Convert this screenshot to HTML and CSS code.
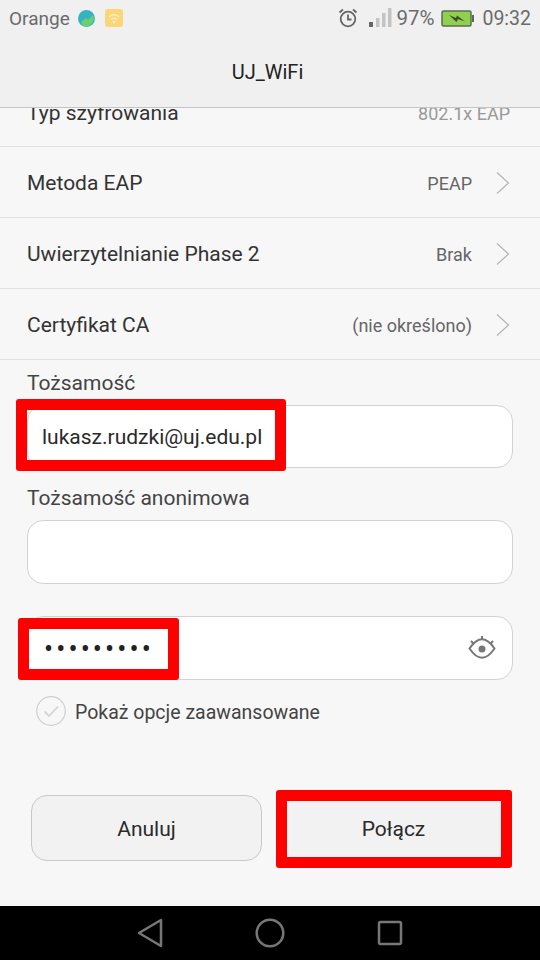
FILE: index.html
```html
<!DOCTYPE html>
<html lang="en">
<head>
    <meta charset="UTF-8">
    <meta name="viewport" content="width=device-width, initial-scale=1.0">
    <title>UJ_WiFi</title>
    <link rel="stylesheet" href="styles.css">
</head>
<body>
    <div class="screen">
        <div class="header">
            <div class="status-bar">
                <span class="carrier">Orange</span>
                <svg class="globe-icon" width="19" height="19" viewBox="0 0 19 19">
                    <circle cx="9.5" cy="9.5" r="8.5" fill="#35b3c4"/>
                    <path d="M4 13 L9 9 L11 11 L16 6 L17 10 Q15 16 9.5 18 Q6 17.500 4 13 Z" fill="#6fd06a"/>
                </svg>
                <svg class="wifi-icon" width="18" height="18" viewBox="0 0 18 18">
                    <rect width="18" height="18" rx="3" fill="#fbd679"/>
                    <path d="M4 8 Q9 3.500 14 8 M6 10.500 Q9 8 12 10.500" fill="none" stroke="#fdeebd" stroke-width="1.300"/>
                    <circle cx="9" cy="13" r="1.300" fill="#fdeebd"/>
                </svg>
                <span class="status-spacer"></span>
                <svg class="alarm-icon" width="20" height="20" viewBox="0 0 20 20" fill="none" stroke="#666" stroke-width="1.800">
                    <circle cx="10" cy="11" r="7.300"/>
                    <path d="M10 6.500 V11.500 H13.500"/>
                    <path d="M1.500 4.500 L5 1.500 M18.500 4.500 L15 1.500"/>
                </svg>
                <svg class="signal-icon" width="23" height="20" viewBox="0 0 23 20">
                    <rect x="0" y="14" width="4" height="5" fill="#666"/>
                    <rect x="7" y="10" width="3.500" height="9" fill="#c4c4c4"/>
                    <rect x="13" y="5" width="3.500" height="14" fill="#c4c4c4"/>
                    <rect x="19" y="0" width="3.500" height="19" fill="#c4c4c4"/>
                </svg>
                <span class="battery-text">97%</span>
                <svg class="battery-icon" width="33" height="17" viewBox="0 0 33 17">
                    <rect x="1" y="1" width="29" height="15" rx="1.500" fill="#8fd14f" stroke="#5c6b52" stroke-width="1.500"/>
                    <rect x="31" y="5" width="2" height="7" fill="#5c6b52"/>
                    <path d="M8 5 L15 8 L16 5.500 L24 11.500 L17 9 L15.500 12 Z" fill="#3b4a32"/>
                </svg>
                <span class="clock">09:32</span>
            </div>
            <div class="title">UJ_WiFi</div>
        </div>

        <div class="content">
            <div class="list">
                <div class="row row-first">
                    <span class="row-label">Typ szyfrowania</span>
                    <span class="row-value row-value-muted">802.1x EAP</span>
                </div>
                <div class="row">
                    <span class="row-label">Metoda EAP</span>
                    <span class="row-value">PEAP</span>
                    <svg class="chevron" width="14" height="24" viewBox="0 0 14 24"><path d="M1 1.500 L12.500 12 L1 22.500"/></svg>
                </div>
                <div class="row">
                    <span class="row-label">Uwierzytelnianie Phase 2</span>
                    <span class="row-value">Brak</span>
                    <svg class="chevron" width="14" height="24" viewBox="0 0 14 24"><path d="M1 1.500 L12.500 12 L1 22.500"/></svg>
                </div>
                <div class="row">
                    <span class="row-label">Certyfikat CA</span>
                    <span class="row-value">(nie określono)</span>
                    <svg class="chevron" width="14" height="24" viewBox="0 0 14 24"><path d="M1 1.500 L12.500 12 L1 22.500"/></svg>
                </div>
            </div>

            <div class="form">
                <div class="field-label field-label-first">Tożsamość</div>
                <div class="input input-identity">
                    <span class="input-text">lukasz.rudzki@uj.edu.pl</span>
                    <div class="mark mark-identity"></div>
                </div>

                <div class="field-label field-label-second">Tożsamość anonimowa</div>
                <div class="input input-anon"></div>

                <div class="input input-password">
                    <span class="input-dots">•••••••••</span>
                    <svg class="eye-icon" width="28" height="26" viewBox="0 0 28 26" fill="none" stroke="#777" stroke-width="2">
                        <path d="M1.500 13.500 Q14 -5 26.500 13.500 Q14 32 1.500 13.500 Z"/>
                        <circle cx="14" cy="14" r="3.500" fill="#777" stroke="none"/>
                        <path d="M14 1 V5 M3 6 L6 9 M25 6 L22 9"/>
                    </svg>
                    <div class="mark mark-password"></div>
                </div>

                <div class="check-row">
                    <svg class="check-icon" width="30" height="30" viewBox="0 0 30 30" fill="none">
                        <circle cx="15" cy="15" r="14.300" stroke="#cfcfcf" stroke-width="1.200"/>
                        <path d="M8.500 15.500 L13 20 L22 10.500" stroke="#d4d4d4" stroke-width="1.800"/>
                    </svg>
                    <span class="check-label">Pokaż opcje zaawansowane</span>
                </div>

                <div class="actions">
                    <div class="btn">Anuluj</div>
                    <div class="btn btn-connect">
                        Połącz
                        <div class="mark mark-connect"></div>
                    </div>
                </div>
            </div>
        </div>

        <div class="nav-bar">
            <svg width="26" height="30" viewBox="0 0 26 30" fill="none" stroke="#777" stroke-width="2.500" stroke-linejoin="round">
                <path d="M24 2 V28 L2 15 Z"/>
            </svg>
            <svg width="30" height="30" viewBox="0 0 30 30" fill="none" stroke="#777" stroke-width="2.500">
                <circle cx="15" cy="15" r="13.300"/>
            </svg>
            <svg width="26" height="26" viewBox="0 0 26 26" fill="none" stroke="#777" stroke-width="2.500" stroke-linejoin="round">
                <rect x="2" y="2" width="22" height="22" rx="1.500"/>
            </svg>
        </div>
    </div>
</body>
</html>
```

FILE: styles.css
```css
/* General */
body {
    margin: 0;
    font-family: Roboto, "Liberation Sans", sans-serif;
    background: #f7f7f7;
    color: #333;
}

.screen {
    width: 540px;
    height: 960px;
    display: flex;
    flex-direction: column;
    overflow: hidden;
}

/* Header */
.header {
    height: 107px;
    flex-shrink: 0;
    background: #f0f0f0;
    border-bottom: 1px solid #c4c4c4;
    position: relative;
    z-index: 1;
}

.status-bar {
    height: 36px;
    display: flex;
    align-items: center;
    padding: 0 9px;
    font-size: 19px;
    color: #6b6b6b;
}

.globe-icon {
    margin-left: 7px;
}

.wifi-icon {
    margin-left: 9px;
}

.status-spacer {
    flex: 1;
}

.signal-icon {
    margin-left: 11px;
}

.battery-text {
    margin-left: 4px;
    font-size: 20.5px;
}

.battery-icon {
    margin-left: 7px;
}

.clock {
    margin-left: 8px;
    font-size: 19.5px;
}

.title {
    text-align: center;
    font-size: 20px;
    line-height: 24px;
    margin-top: 24px;
    padding-right: 5px;
    color: #222;
}

/* Settings list */
.content {
    flex: 1;
    overflow: hidden;
}

.list {
    margin-top: -32px;
}

.row {
    box-sizing: border-box;
    height: 71px;
    display: flex;
    align-items: center;
    padding: 2px 30px 0 27px;
    border-bottom: 1px solid #e2e2e2;
}

.row-first {
    padding-top: 4px;
}

.row-label {
    flex: 1;
    font-size: 21px;
}

.row-value {
    font-size: 18px;
    color: #666;
}

.row-value-muted {
    color: #999;
}

.chevron {
    margin-left: 24px;
    fill: none;
    stroke: #b4b4b4;
    stroke-width: 1.200;
}

/* Form */
.form {
    padding: 0 27px;
}

.field-label {
    font-size: 21px;
    color: #444;
}

.field-label-first {
    height: 45px;
    line-height: 47px;
}

.field-label-second {
    height: 52px;
    line-height: 60px;
}

.input {
    position: relative;
    height: 62px;
    display: flex;
    align-items: center;
    padding-left: 14px;
    background: #fff;
    border: 1px solid #d2d2d2;
    border-radius: 16px;
}

.input-identity {
    height: 61px;
}

.input-text {
    font-size: 21px;
    color: #2a2a2a;
}

.input-anon {
    margin-bottom: 32px;
}

.input-dots {
    flex: 1;
    padding: 2px 0 0 2px;
    font-size: 27px;
    letter-spacing: 3.100px;
    color: #222;
}

.eye-icon {
    margin-right: 16px;
}

/* Red highlights drawn over the screenshot */
.mark {
    position: absolute;
    box-sizing: border-box;
    border: 11px solid #f00;
    border-radius: 3px;
}

.mark-identity {
    left: -12px;
    top: -7px;
    width: 270px;
    height: 72px;
}

.mark-password {
    left: -10px;
    top: 1px;
    width: 161px;
    height: 62px;
}

.mark-connect {
    left: -1px;
    top: -6px;
    width: 236px;
    height: 78px;
}

.check-row {
    display: flex;
    align-items: center;
    gap: 9px;
    height: 30px;
    margin-top: 16px;
    padding-left: 9px;
    font-size: 19.5px;
    color: #444;
}

.check-label {
    padding-top: 2px;
}

.actions {
    display: flex;
    gap: 14px;
    margin-top: 69px;
    padding-left: 4px;
}

.btn {
    box-sizing: border-box;
    width: 231px;
    height: 66px;
    position: relative;
    display: flex;
    align-items: center;
    justify-content: center;
    padding-top: 2px;
    background: #f2f2f2;
    border: 1px solid #c8c8c8;
    border-radius: 16px;
    font-size: 21px;
    color: #2a2a2a;
}

.btn-connect {
    padding-left: 4px;
}

/* Navigation bar */
.nav-bar {
    height: 54px;
    flex-shrink: 0;
    background: #000;
    display: flex;
    align-items: center;
    justify-content: center;
    gap: 92px;
}
```
